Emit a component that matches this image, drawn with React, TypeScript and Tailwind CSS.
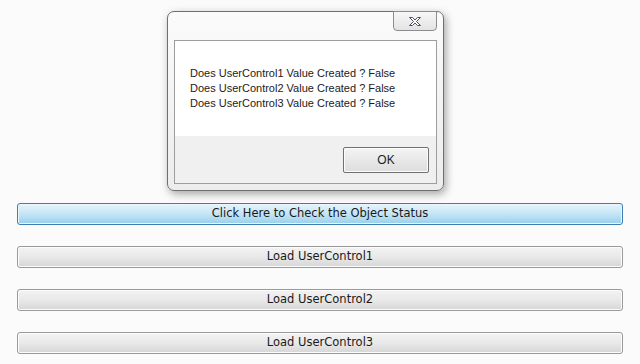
import React from 'react';

const loadButtons = ['Load UserControl1', 'Load UserControl2', 'Load UserControl3'];

const lines = [
  'Does UserControl1 Value Created ? False',
  'Does UserControl2 Value Created ? False',
  'Does UserControl3 Value Created ? False',
];

function CloseGlyph() {
  return (
    <svg width="14" height="11" viewBox="0 0 14 11">
      <path
        d="M1.5 1.5h3l2.5 2.5 2.5-2.5h3l-4 4 4 4h-3l-2.5-2.5-2.5 2.5h-3l4-4z"
        fill="#fff"
        stroke="#4b5262"
        strokeWidth="1"
        strokeLinejoin="round"
      />
    </svg>
  );
}

function MessageBox() {
  return (
    <div className="absolute left-[167px] top-[11px] w-[277px] h-[180px] rounded-[7px] border border-[#6f6f6f] bg-gradient-to-b from-[#fbfbfb] to-[#ececec] shadow-[2px_3px_8px_rgba(0,0,0,0.35)] flex flex-col px-[6px] pb-[6px]">
      <div className="h-[28px] flex justify-end">
        <div className="w-[44px] h-[20px] -mt-px rounded-b-[4px] border border-[#8d8d8d] bg-gradient-to-b from-[#f7f7f7] to-[#e3e3e3] flex items-center justify-center">
          <CloseGlyph />
        </div>
      </div>
      <div className="flex-1 border border-[#9d9d9d] flex flex-col">
        <div className="h-[95px] bg-white pl-[15px] pt-[25px] text-[11px] leading-[15px] text-[#231a1a] font-['Liberation_Sans',sans-serif]">
          {lines.map((line) => (
            <div key={line}>{line}</div>
          ))}
        </div>
        <div className="flex-1 bg-[#f0f0f0] flex justify-end items-start pt-[11px] pr-[7px]">
          <div className="w-[86px] h-[26px] border border-[#707070] rounded-[2px] bg-gradient-to-b from-[#f4f4f4] to-[#dddddd] shadow-[inset_0_0_0_1px_#fcfcfc] flex items-center justify-center text-[12px] text-[#1d1d1d] font-['Liberation_Sans',sans-serif]">
            OK
          </div>
        </div>
      </div>
    </div>
  );
}

export default function App() {
  return (
    <div className="relative w-[640px] h-[364px] bg-[#fbfbfb] overflow-hidden font-['DejaVu_Sans',sans-serif]">
      <MessageBox />
      <div className="flex flex-col gap-[21px] px-[17px] pt-[203px]">
        <button className="h-[22px] rounded-[3px] border border-[#3c7fb1] bg-gradient-to-b from-[#e6f4fc] via-[#c4e5f6] to-[#98cfec] shadow-[inset_0_0_0_1px_#eaf6fd] text-[11.5px] text-[#1a1a1a]">
          Click Here to Check the Object Status
        </button>
        {loadButtons.map((label) => (
          <button
            key={label}
            className="h-[22px] rounded-[3px] border border-[#9a9a9a] bg-gradient-to-b from-[#f3f3f3] via-[#e9e9e9] to-[#d6d6d6] shadow-[inset_0_0_0_1px_#fcfcfc] text-[11.5px] text-[#1a1a1a]"
          >
            {label}
          </button>
        ))}
      </div>
    </div>
  );
}
